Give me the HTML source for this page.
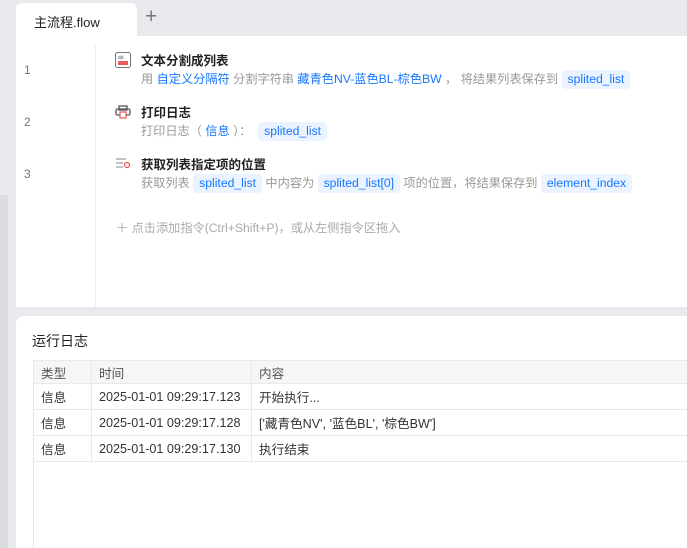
<!DOCTYPE html>
<html><head><meta charset="utf-8"><style>
*{margin:0;padding:0;box-sizing:border-box}
body{width:687px;height:548px;overflow:hidden;background:#e9eaee;font-family:"Liberation Sans","Noto Sans CJK SC",sans-serif;position:relative;font-size:12.5px}
.abs{position:absolute}
.tab{left:16px;top:3px;width:121px;height:33px;background:#fff;border-radius:6px 6px 0 0;font-size:13px;color:#222;padding:9px 0 0 18px}
.plus{left:145px;top:5px;font-size:21px;color:#777;font-weight:300}
.editor{left:16px;top:36px;width:671px;height:271px;background:#fff}
.gutter{left:95px;top:45px;width:1px;height:262px;background:#eceef1}
.ln{left:24px;color:#777;font-size:12px}
.title{font-size:12.5px;font-weight:bold;color:#222}
.desc{font-size:12.2px;color:#999;white-space:nowrap}
.b{color:#1677ff}
.tag{display:inline-block;background:#eaf3ff;color:#1677ff;border-radius:4px;padding:2px 6px;line-height:15px}
.log{left:16px;top:316px;width:671px;height:232px;background:#fff;border-radius:8px 0 0 0}
table{border-collapse:collapse;position:absolute;left:33px;top:360px;width:660px;font-size:12.6px;color:#333}
td{border:1px solid #e8e9ec;height:26px;padding-left:7px}
tr.h td{background:#f5f6f8;height:23px;color:#555}
</style></head><body>
<div class="abs" style="left:0;top:195px;width:8px;height:353px;background:#dcdde1"></div>
<div class="abs tab">主流程.flow</div>
<div class="abs plus">+</div>
<div class="abs editor"></div>
<div class="abs gutter"></div>
<div class="abs ln" style="top:63px">1</div>
<div class="abs ln" style="top:115px">2</div>
<div class="abs ln" style="top:167px">3</div>

<svg class="abs" style="left:115px;top:52px" width="16" height="16"><rect x="0.5" y="0.5" width="15" height="15" rx="2" fill="#fff" stroke="#777"/><rect x="3" y="9" width="10" height="4" fill="#f05a5a"/><text x="3" y="7" font-size="5" fill="#555">ab</text></svg>
<div class="abs title" style="left:141px;top:50px">文本分割成列表</div>
<div class="abs desc" style="left:141px;top:69px">用 <span class="b">自定义分隔符</span> 分割字符串 <span class="b">藏青色NV-蓝色BL-棕色BW</span> ， 将结果列表保存到 <span class="tag">splited_list</span></div>

<svg class="abs" style="left:115px;top:105px" width="16" height="14"><rect x="4" y="1" width="8" height="4" fill="none" stroke="#555" stroke-width="1.3"/><rect x="1" y="4" width="14" height="6" rx="1.5" fill="none" stroke="#555" stroke-width="1.3"/><rect x="5" y="7" width="6" height="6" fill="#fff" stroke="#e55" stroke-width="1.2"/></svg>
<div class="abs title" style="left:141px;top:102px">打印日志</div>
<div class="abs desc" style="left:141px;top:121px">打印日志（ <span class="b">信息</span> ）： &nbsp;<span class="tag">splited_list</span></div>

<svg class="abs" style="left:115px;top:157px" width="16" height="12"><g stroke="#999" stroke-width="1.2"><line x1="1" y1="2" x2="11" y2="2"/><line x1="1" y1="6" x2="8" y2="6"/><line x1="1" y1="10" x2="8" y2="10"/></g><circle cx="12" cy="8" r="2.5" fill="#fff" stroke="#e55" stroke-width="1.2"/></svg>
<div class="abs title" style="left:141px;top:154px">获取列表指定项的位置</div>
<div class="abs desc" style="left:141px;top:173px">获取列表 <span class="tag">splited_list</span> 中内容为 <span class="tag">splited_list[0]</span> 项的位置，将结果保存到 <span class="tag">element_index</span></div>

<div class="abs desc" style="left:116px;top:218px;color:#aaa">＋ 点击添加指令(Ctrl+Shift+P)，或从左侧指令区拖入</div>

<div class="abs log"></div>
<div class="abs" style="left:32px;top:331px;font-size:14px;color:#222">运行日志</div>
<table>
<tr class="h"><td style="width:58px">类型</td><td style="width:160px">时间</td><td>内容</td></tr>
<tr><td>信息</td><td>2025-01-01 09:29:17.123</td><td>开始执行...</td></tr>
<tr><td>信息</td><td>2025-01-01 09:29:17.128</td><td>['藏青色NV', '蓝色BL', '棕色BW']</td></tr>
<tr><td>信息</td><td>2025-01-01 09:29:17.130</td><td>执行结束</td></tr>
</table>
<div class="abs" style="left:33px;top:461px;width:1px;height:87px;background:#e8e9ec"></div>
</body></html>
